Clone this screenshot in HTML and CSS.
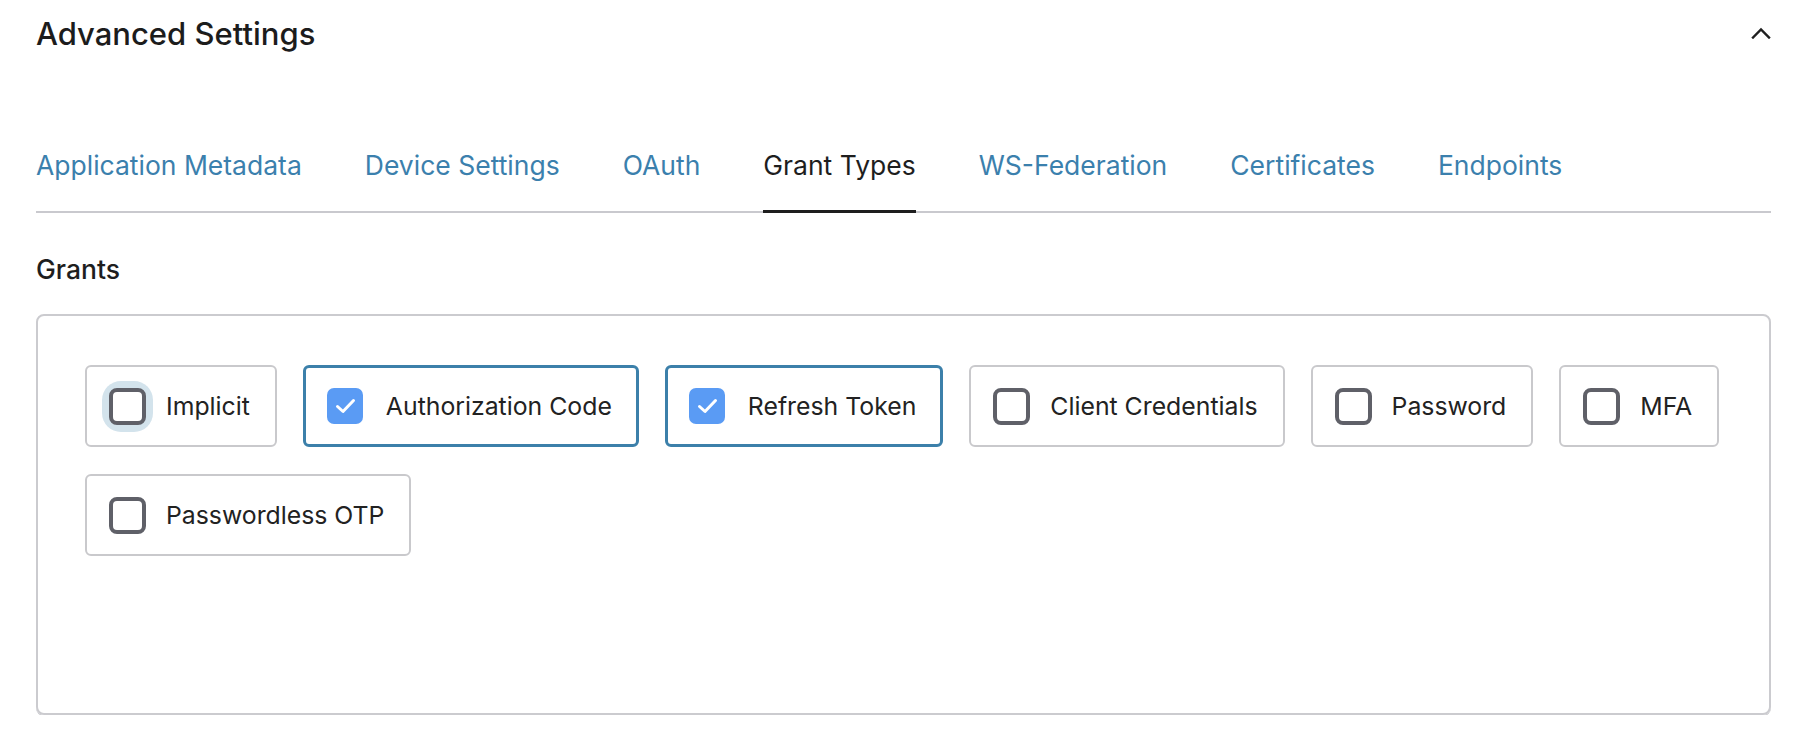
FILE: index.html
```html
<!DOCTYPE html>
<html lang="en">
<head>
<meta charset="utf-8">
<title>Advanced Settings</title>
<link rel="stylesheet" href="styles.css">
</head>
<body>
<div class="page">
  <header class="header">
    <h2 class="title">Advanced Settings</h2>
    <button class="collapse" aria-label="Collapse">
      <svg width="20" height="12" viewBox="0 0 20 12"><path d="M2 10.5 L10 2.5 L18 10.5" fill="none" stroke="#1f1f1f" stroke-width="2.4" stroke-linecap="square"/></svg>
    </button>
  </header>

  <nav class="tabs">
    <a class="tab">Application Metadata</a>
    <a class="tab">Device Settings</a>
    <a class="tab">OAuth</a>
    <a class="tab active">Grant Types</a>
    <a class="tab">WS-Federation</a>
    <a class="tab">Certificates</a>
    <a class="tab">Endpoints</a>
  </nav>

  <h3 class="section-label">Grants</h3>

  <div class="grants">
    <label class="grant">
      <span class="check focus"><span class="box"></span></span>
      <span class="grant-name">Implicit</span>
    </label>
    <label class="grant selected">
      <span class="check"><span class="box checked"><svg width="23" height="18" viewBox="0 0 23 18"><path d="M3.5 9.5 L9 14.5 L19.5 3.5" fill="none" stroke="#fff" stroke-width="3" stroke-linecap="round" stroke-linejoin="round"/></svg></span></span>
      <span class="grant-name">Authorization Code</span>
    </label>
    <label class="grant selected">
      <span class="check"><span class="box checked"><svg width="23" height="18" viewBox="0 0 23 18"><path d="M3.5 9.5 L9 14.5 L19.5 3.5" fill="none" stroke="#fff" stroke-width="3" stroke-linecap="round" stroke-linejoin="round"/></svg></span></span>
      <span class="grant-name">Refresh Token</span>
    </label>
    <label class="grant">
      <span class="check"><span class="box"></span></span>
      <span class="grant-name">Client Credentials</span>
    </label>
    <label class="grant">
      <span class="check"><span class="box"></span></span>
      <span class="grant-name">Password</span>
    </label>
    <label class="grant">
      <span class="check"><span class="box"></span></span>
      <span class="grant-name">MFA</span>
    </label>
    <label class="grant">
      <span class="check"><span class="box"></span></span>
      <span class="grant-name">Passwordless OTP</span>
    </label>
  </div>
</div>
</body>
</html>
```

FILE: styles.css
```css
* { box-sizing: border-box; }

body {
  margin: 0;
  background: #ffffff;
  font-family: Inter, "Noto Sans", "Liberation Sans", sans-serif;
  color: #1e1e1e;
}

.page {
  padding: 0 37px 0 36px;
}

.header {
  height: 66px;
  display: flex;
  align-items: center;
  justify-content: space-between;
}

.title {
  margin: 0;
  font-size: 31px;
  font-weight: 500;
  color: #1c1c1c;
}

.collapse {
  border: 0;
  background: none;
  padding: 0;
  display: flex;
  align-items: center;
}

.tabs {
  margin-top: 84px;
  display: flex;
  gap: 63px;
  border-bottom: 2px solid #c9c9ce;
}

.tab {
  font-size: 26.5px;
  line-height: 30px;
  padding-bottom: 30px;
  color: #3b80ad;
  cursor: pointer;
  margin-bottom: -2px;
  border-bottom: 3px solid transparent;
}

.tab.active {
  color: #1e1e1e;
  border-bottom-color: #1e1e1e;
}

.section-label {
  margin: 41px 0 0;
  font-size: 26.5px;
  line-height: 30px;
  font-weight: 500;
  color: #1e1e1e;
}

.grants {
  margin-top: 30px;
  border: 2px solid #cbcbcf;
  border-radius: 8px;
  box-shadow: 0 1px 0 #c4c4c9;
  padding: 49px 47px 157px;
  display: flex;
  flex-wrap: wrap;
  gap: 27px 26px;
  align-content: flex-start;
  min-height: 401px;
}

.grant {
  height: 82px;
  display: flex;
  align-items: center;
  gap: 20px;
  padding: 0 25px 0 22px;
  border: 2px solid #c9c9cc;
  border-radius: 6px;
  cursor: pointer;
}

.grant.selected {
  border: 3px solid #3c80aa;
  padding: 0 24px 0 21px;
  gap: 22px;
}

.check {
  width: 37px;
  height: 37px;
  display: flex;
  align-items: center;
  justify-content: center;
  border-radius: 12px;
}

.check.focus {
  background: #d3e3ec;
  box-shadow: 0 0 0 7px #d3e3ec;
}

.box {
  width: 37px;
  height: 37px;
  border: 4px solid #5f6068;
  border-radius: 8px;
  background: #fff;
  display: flex;
  align-items: center;
  justify-content: center;
}

.box.checked {
  width: 36px;
  height: 36px;
  border: 0;
  background: #5a9bf4;
  border-radius: 7px;
}

.grant-name {
  font-size: 24.8px;
  line-height: 30px;
  color: #222222;
}
```
